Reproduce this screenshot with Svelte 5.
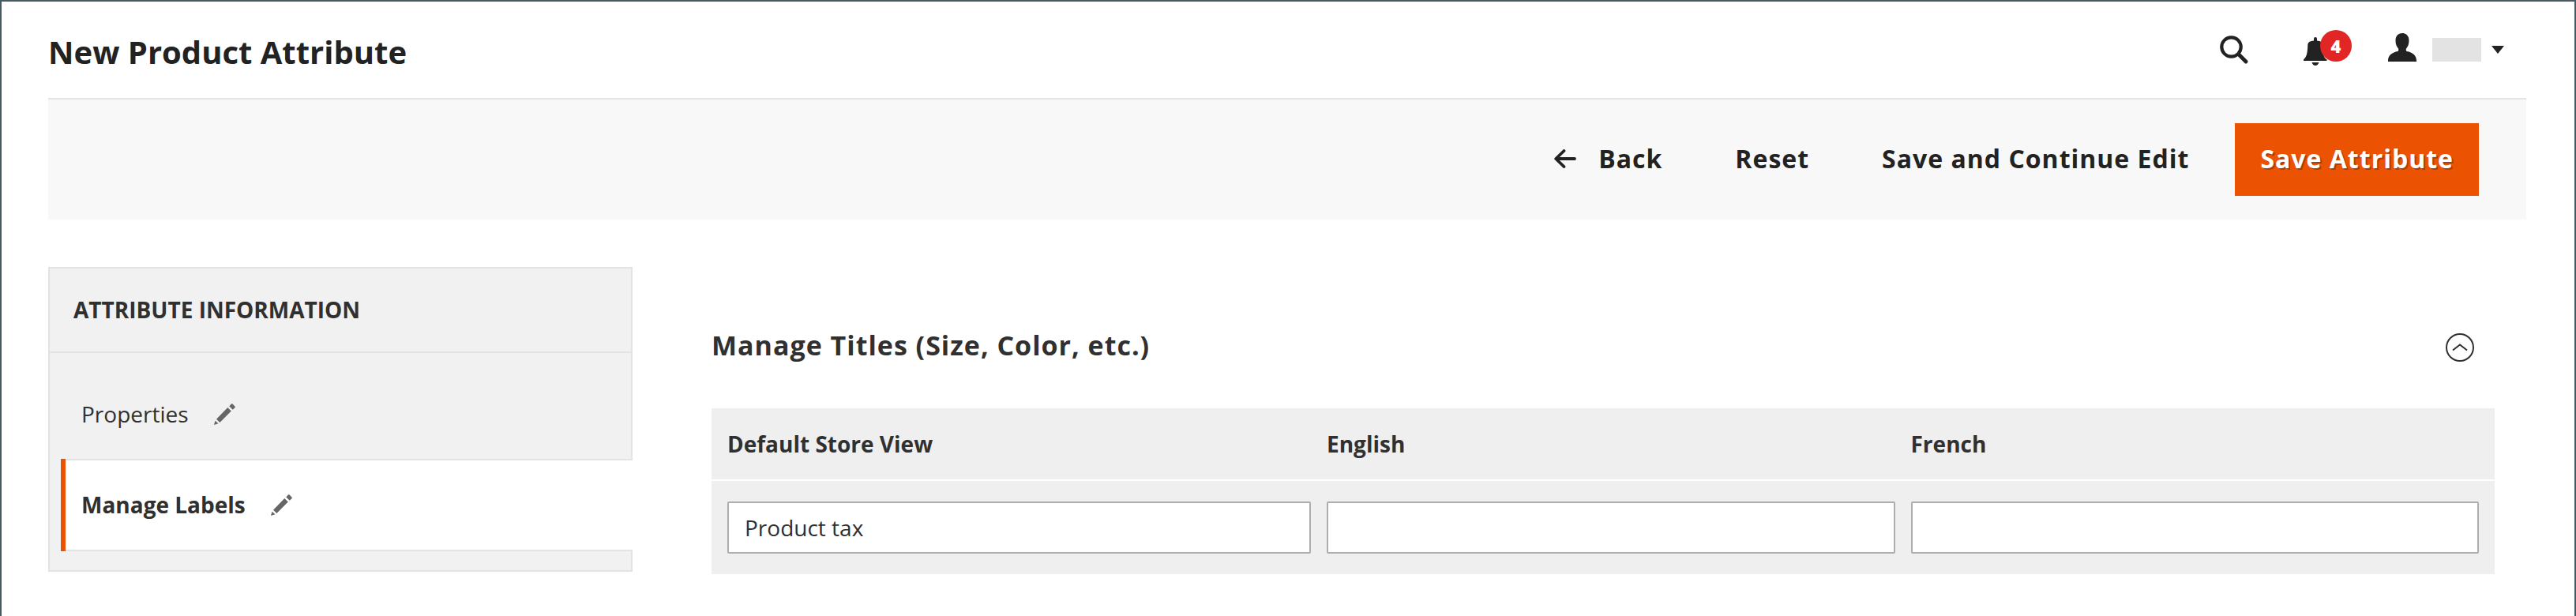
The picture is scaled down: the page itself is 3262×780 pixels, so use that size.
<script>
  const tabs = [
    { name: 'Properties', active: false },
    { name: 'Manage Labels', active: true }
  ];
  let labels = $state([
    { store: 'Default Store View', value: 'Product tax' },
    { store: 'English', value: '' },
    { store: 'French', value: '' }
  ]);
  let open = $state(true);
</script>

<div class="page">
  <header class="header">
    <h1>New Product Attribute</h1>
    <div class="tools">
      <button class="icon-button search" aria-label="Search">
        <svg width="36" height="36" viewBox="0 0 36 36" fill="none" stroke="#222">
          <circle cx="14.5" cy="14.5" r="12.2" stroke-width="4.2" />
          <path d="M24 24l9 9" stroke-width="4.8" stroke-linecap="round" />
        </svg>
      </button>
      <button class="icon-button bell" aria-label="Notifications">
        <svg width="30" height="36" viewBox="0 0 30 36" fill="#222">
          <path d="M13 4.500V2a2 2 0 0 1 4 0v2.500c4.800.4 7 2 7.100 5.500C24.400 22 25.500 26 29.500 28.500V30H0v-1.500C4 25 5 20 5.300 10 5.500 6.500 8.200 4.900 13 4.500zM10.500 32h9c-.8 2.700-2.500 4-4.500 4s-3.700-1.300-4.500-4z" />
        </svg>
        <span class="badge">4</span>
      </button>
      <button class="icon-button account" aria-label="Account">
        <svg width="36" height="36" viewBox="0 0 36 36" fill="#222">
          <path d="M18 0c5.300 0 8.500 3.800 8.500 9.500 0 4.500-1.500 7.800-3.700 10.300v2c0 .7.300 1.100 1 1.200C30.500 24.200 36 28 36 34.500V36H0v-1.500C0 28 5.500 24.200 12.200 23c.7-.1 1-.5 1-1.200v-2C11 17.300 9.500 14 9.500 9.500 9.500 3.800 12.700 0 18 0z" />
        </svg>
        <span class="user"></span>
        <svg class="caret" width="16" height="10" viewBox="0 0 16 10" fill="#222"><path d="M0 0h16L8 10z" /></svg>
      </button>
    </div>
  </header>

  <div class="actions">
    <button class="action">
      <svg width="28" height="24" viewBox="0 0 28 24" fill="none" stroke="#222" stroke-width="3.8" stroke-linecap="round" stroke-linejoin="round">
        <path d="M26 12H3M12.500 2L2.200 12l10.300 10" />
      </svg>
      Back
    </button>
    <button class="action">Reset</button>
    <button class="action">Save and Continue Edit</button>
    <button class="action primary">Save Attribute</button>
  </div>

  <div class="columns">
    <nav class="sidebar" aria-label="Attribute information">
      <h2>ATTRIBUTE INFORMATION</h2>
      <ul>
        {#each tabs as tab}
          <li class:active={tab.active}>
            <a href="#{tab.name}">
              {tab.name}
              <svg width="27" height="27" viewBox="0 0 27 27" fill="#666">
                <path d="M21.800.6q.9-.8 1.800 0l2.800 2.800q.9.900 0 1.800L23.800 7.800 19.300 3.600zM17.300 5l4.500 4.400L7.400 24 3 19.700zM1.500 21.700l4 3.600L0 27z" />
              </svg>
            </a>
          </li>
        {/each}
      </ul>
    </nav>

    <main>
      <div class="section-title">
        <h2>Manage Titles (Size, Color, etc.)</h2>
        <button class="icon-button toggle" aria-label="Toggle section" aria-expanded={open} onclick={() => (open = !open)}>
          <svg width="36" height="36" viewBox="0 0 36 36" fill="none" stroke="#303030" stroke-width="2">
            <circle cx="18" cy="18" r="17" />
            <path d="M9 21.500L18 14.500l9 7" />
          </svg>
        </button>
      </div>
      {#if open}
        <table>
          <thead>
            <tr>
              {#each labels as label, i}
                <th scope="col"><label for="label-{i}">{label.store}</label></th>
              {/each}
            </tr>
          </thead>
          <tbody>
            <tr>
              {#each labels as label, i}
                <td><input id="label-{i}" type="text" bind:value={label.value} /></td>
              {/each}
            </tr>
          </tbody>
        </table>
      {/if}
    </main>
  </div>
</div>

<style>
  :global(body) {
    margin: 0;
  }
  .page {
    box-sizing: border-box;
    min-height: 100vh;
    padding: 0 61px 0 59px;
    border: 2px solid #465a63;
    border-bottom: 0;
    background: #fff;
    color: #303030;
    font-family: 'Open Sans', sans-serif;
    font-size: 28px;
    line-height: 38px;
  }
  h1,
  h2,
  ul {
    margin: 0;
    padding: 0;
  }
  svg {
    display: block;
    flex: none;
  }
  button {
    padding: 0;
    border: 0;
    background: none;
    color: #222;
    font: inherit;
    cursor: pointer;
  }
  .header {
    display: flex;
    justify-content: space-between;
    height: 122px;
    border-bottom: 2px solid #e3e3e3;
  }
  h1 {
    padding-top: 36px;
    color: #222;
    font-size: 40px;
    font-weight: 700;
    line-height: 56px;
  }
  .tools {
    display: flex;
    align-items: flex-start;
    padding: 40px 28px 0 0;
  }
  .icon-button {
    display: flex;
    align-items: flex-start;
  }
  .search {
    padding-top: 3px;
  }
  .bell {
    position: relative;
    margin-left: 70px;
    padding: 5px 31px 0 0;
  }
  .badge {
    position: absolute;
    top: -4px;
    right: 0;
    width: 40px;
    border-radius: 50%;
    background: #e22626;
    color: #fff;
    font-size: 22px;
    font-weight: 800;
    line-height: 40px;
  }
  .account {
    margin-left: 46px;
  }
  .user {
    width: 62px;
    height: 30px;
    margin: 6px 13px 0 20px;
    background: #e3e3e3;
  }
  .caret {
    margin-top: 16px;
  }
  .actions {
    display: flex;
    justify-content: flex-end;
    align-items: center;
    padding: 30px 60px;
    background: #f8f8f8;
  }
  .action {
    display: flex;
    align-items: center;
    gap: 28px;
    padding: 0 46px 2px;
    font-size: 32px;
    font-weight: 700;
    letter-spacing: 1px;
    line-height: 90px;
  }
  .primary {
    margin-left: 12px;
    padding: 0 32px 2px;
    background: #eb5202;
    color: #fff;
    text-shadow: 2px 2px 0 rgba(0, 0, 0, 0.25);
  }
  .columns {
    display: flex;
    gap: 100px;
    padding-top: 60px;
  }
  .sidebar {
    box-sizing: border-box;
    flex: 0 0 740px;
    align-self: flex-start;
    padding-bottom: 24px;
    border: 2px solid #e3e3e3;
    background: #f1f1f1;
  }
  .sidebar h2 {
    padding: 33px 30px 34px;
    border-bottom: 2px solid #e3e3e3;
    font-size: 28px;
    font-weight: 700;
  }
  ul {
    padding: 21px 0 0 14px;
    list-style: none;
  }
  a {
    display: flex;
    align-items: center;
    gap: 32px;
    padding: 37px 0 38px 26px;
    color: #303030;
    text-decoration: none;
  }
  .active {
    margin-right: -2px;
    border-left: 6px solid #eb5202;
    background: #fff;
    font-weight: 700;
  }
  .active a {
    padding-left: 20px;
    border: 2px solid #e3e3e3;
    border-width: 2px 0;
  }
  main {
    flex: 1;
    min-width: 0;
    padding: 76px 40px 0 0;
  }
  .section-title {
    display: flex;
    justify-content: space-between;
    align-items: center;
    padding-right: 26px;
  }
  .section-title h2 {
    font-size: 34px;
    font-weight: 700;
    letter-spacing: 1px;
    line-height: 46px;
  }
  .toggle {
    padding-top: 6px;
  }
  table {
    width: 100%;
    margin-top: 57px;
    table-layout: fixed;
    border-spacing: 0;
    background: #efefef;
  }
  th,
  td {
    padding: 26px 20px 26px 0;
    text-align: left;
  }
  th {
    border-bottom: 2px solid #fff;
    font-weight: 700;
  }
  th:first-child {
    width: 34.5%;
  }
  th:first-child,
  td:first-child {
    box-sizing: border-box;
    padding-left: 20px;
  }
  input {
    box-sizing: border-box;
    display: block;
    width: 100%;
    padding: 12px 20px;
    border: 2px solid #adadad;
    border-radius: 2px;
    background: #fff;
    color: #303030;
    font: inherit;
    line-height: 38px;
  }
</style>
